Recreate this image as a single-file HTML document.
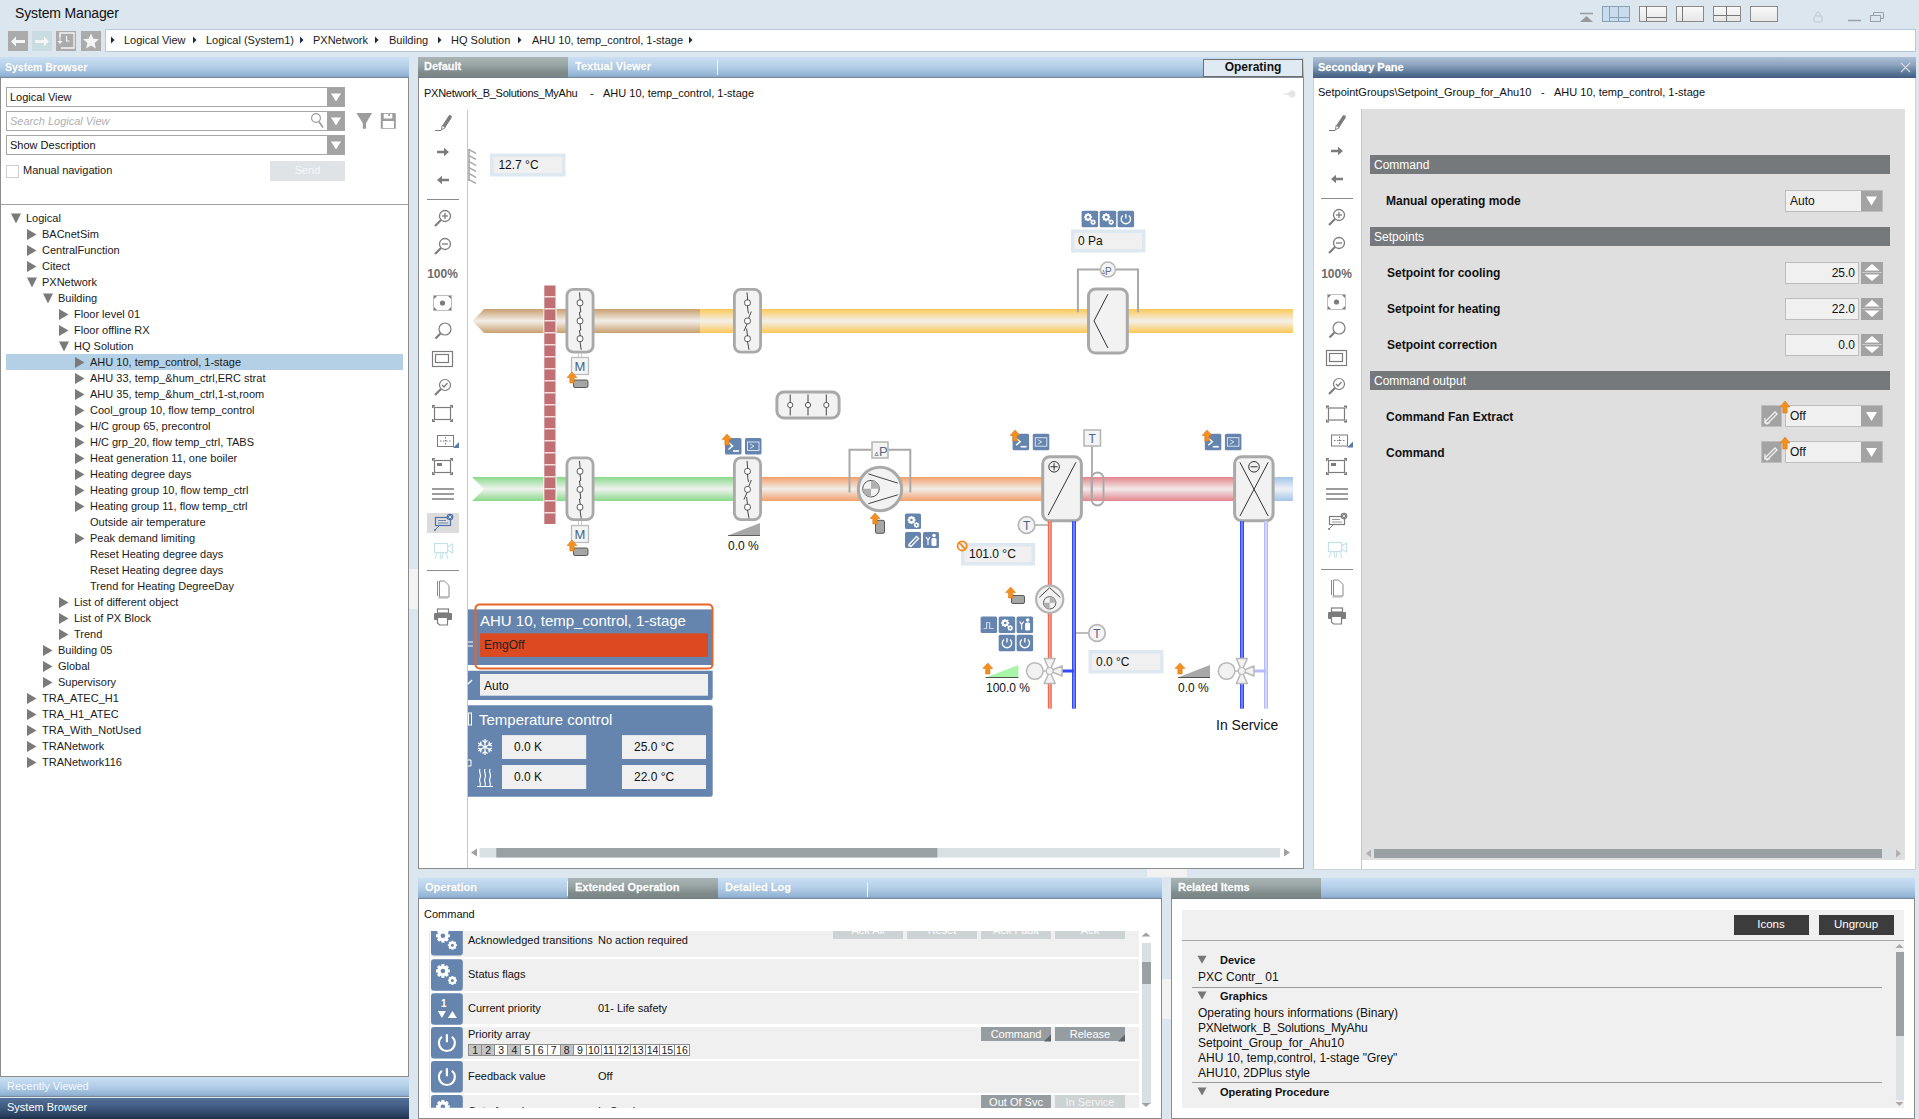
<!DOCTYPE html>
<html><head><meta charset="utf-8"><title>System Manager</title>
<style>
html,body{margin:0;padding:0;width:1919px;height:1119px;overflow:hidden;background:#dbe6ef;font-family:"Liberation Sans",sans-serif;color:#000}
.a{position:absolute;box-sizing:border-box}
.t{position:absolute;white-space:nowrap;line-height:1;z-index:60}

.hdrblue{background:linear-gradient(#cadff3 0%,#b4cfe9 45%,#96b6d6 85%,#7f9fc2 100%);box-shadow:inset 0 -1px 0 #7a8898}
.hdrgrey{background:linear-gradient(#aab4b5 0%,#98a3a4 40%,#7e8a8a 75%,#7a8787 100%);box-shadow:inset 0 -1px 0 #6f7c88}
.hdrdark{background:linear-gradient(#adc1d7 0%,#8aa2bd 40%,#5c7898 75%,#3f5b80 100%)}
.ht{color:#fff;font-weight:bold;-webkit-text-stroke:0.3px currentColor;text-shadow:0 0 1px rgba(60,80,110,.5)}
.dd{position:absolute;box-sizing:border-box;background:#fff;border:1px solid #a6a6a6}
.ddb{position:absolute;background:#a3a3a3}

</style></head><body>
<div class="t " style="left:15px;top:5.95px;font-size:14px;color:#111;letter-spacing:-0.15px">System Manager</div><div class="a" style="left:8px;top:31px;width:20px;height:20px;background:#ababab"></div><div class="a" style="left:32px;top:31px;width:20px;height:20px;background:#c8dce2"></div><div class="a" style="left:56px;top:31px;width:20px;height:20px;background:#ababab"></div><div class="a" style="left:81px;top:31px;width:20px;height:20px;background:#ababab"></div><div class="a" style="left:105px;top:29px;width:1811px;height:23px;background:#fff;border:1px solid #b4c8dc"></div><div class="t " style="left:124px;top:35.19px;font-size:11px;color:#1a1a1a">Logical View</div><div class="t " style="left:206px;top:35.19px;font-size:11px;color:#1a1a1a">Logical (System1)</div><div class="t " style="left:313px;top:35.19px;font-size:11px;color:#1a1a1a">PXNetwork</div><div class="t " style="left:389px;top:35.19px;font-size:11px;color:#1a1a1a">Building</div><div class="t " style="left:451px;top:35.19px;font-size:11px;color:#1a1a1a">HQ Solution</div><div class="t " style="left:532px;top:35.19px;font-size:11px;color:#1a1a1a">AHU 10, temp_control, 1-stage</div><div class="a hdrblue" style="left:0px;top:57px;width:409px;height:21px;"></div><div class="t ht" style="left:5px;top:62.11px;font-size:10.5px;font-weight:bold;color:#fff">System Browser</div><div class="a" style="left:0px;top:78px;width:409px;height:999px;background:#fff;border:1px solid #8c8c8c;border-top:none"></div><div class="dd" style="left:6px;top:87px;width:339px;height:20px"></div><div class="ddb" style="left:327px;top:88px;width:17px;height:18px"></div><div class="t " style="left:10px;top:91.69px;font-size:11px;color:#111">Logical View</div><div class="dd" style="left:6px;top:111px;width:339px;height:20px"></div><div class="ddb" style="left:327px;top:112px;width:17px;height:18px"></div><div class="t " style="left:10px;top:115.69px;font-size:11px;font-style:italic;color:#b0b0b0">Search Logical View</div><div class="dd" style="left:6px;top:135px;width:339px;height:20px"></div><div class="ddb" style="left:327px;top:136px;width:17px;height:18px"></div><div class="t " style="left:10px;top:139.69px;font-size:11px;color:#111">Show Description</div><div class="a" style="left:6px;top:165px;width:13px;height:13px;background:#fff;border:1px solid #d0d0d0"></div><div class="t " style="left:23px;top:164.69px;font-size:11px;color:#222">Manual navigation</div><div class="a" style="left:270px;top:161px;width:75px;height:20px;background:#dfe3e6"></div><div class="t" style="left:270.0px;top:165.19px;width:75px;text-align:center;font-size:11px;color:#f6f7f8">Send</div><div class="a" style="left:1px;top:204px;width:407px;height:1px;background:#a0a0a0"></div><div class="a" style="left:6px;top:354px;width:397px;height:16px;background:#b4d0e6"></div><div class="t " style="left:26px;top:213.19px;font-size:11px;color:#1a1a1a">Logical</div><div class="t " style="left:42px;top:229.19px;font-size:11px;color:#1a1a1a">BACnetSim</div><div class="t " style="left:42px;top:245.19px;font-size:11px;color:#1a1a1a">CentralFunction</div><div class="t " style="left:42px;top:261.19px;font-size:11px;color:#1a1a1a">Citect</div><div class="t " style="left:42px;top:277.19px;font-size:11px;color:#1a1a1a">PXNetwork</div><div class="t " style="left:58px;top:293.19px;font-size:11px;color:#1a1a1a">Building</div><div class="t " style="left:74px;top:309.19px;font-size:11px;color:#1a1a1a">Floor level 01</div><div class="t " style="left:74px;top:325.19px;font-size:11px;color:#1a1a1a">Floor offline RX</div><div class="t " style="left:74px;top:341.19px;font-size:11px;color:#1a1a1a">HQ Solution</div><div class="t " style="left:90px;top:357.19px;font-size:11px;color:#1a1a1a">AHU 10, temp_control, 1-stage</div><div class="t " style="left:90px;top:373.19px;font-size:11px;color:#1a1a1a">AHU 33, temp_&amp;hum_ctrl,ERC strat</div><div class="t " style="left:90px;top:389.19px;font-size:11px;color:#1a1a1a">AHU 35, temp_&amp;hum_ctrl,1-st,room</div><div class="t " style="left:90px;top:405.19px;font-size:11px;color:#1a1a1a">Cool_group 10, flow temp_control</div><div class="t " style="left:90px;top:421.19px;font-size:11px;color:#1a1a1a">H/C group 65, precontrol</div><div class="t " style="left:90px;top:437.19px;font-size:11px;color:#1a1a1a">H/C grp_20, flow temp_ctrl, TABS</div><div class="t " style="left:90px;top:453.19px;font-size:11px;color:#1a1a1a">Heat generation 11, one boiler</div><div class="t " style="left:90px;top:469.19px;font-size:11px;color:#1a1a1a">Heating degree days</div><div class="t " style="left:90px;top:485.19px;font-size:11px;color:#1a1a1a">Heating group 10, flow temp_ctrl</div><div class="t " style="left:90px;top:501.19px;font-size:11px;color:#1a1a1a">Heating group 11, flow temp_ctrl</div><div class="t " style="left:90px;top:517.19px;font-size:11px;color:#1a1a1a">Outside air temperature</div><div class="t " style="left:90px;top:533.19px;font-size:11px;color:#1a1a1a">Peak demand limiting</div><div class="t " style="left:90px;top:549.19px;font-size:11px;color:#1a1a1a">Reset Heating degree days</div><div class="t " style="left:90px;top:565.19px;font-size:11px;color:#1a1a1a">Reset Heating degree days</div><div class="t " style="left:90px;top:581.19px;font-size:11px;color:#1a1a1a">Trend for Heating DegreeDay</div><div class="t " style="left:74px;top:597.19px;font-size:11px;color:#1a1a1a">List of different object</div><div class="t " style="left:74px;top:613.19px;font-size:11px;color:#1a1a1a">List of PX Block</div><div class="t " style="left:74px;top:629.19px;font-size:11px;color:#1a1a1a">Trend</div><div class="t " style="left:58px;top:645.19px;font-size:11px;color:#1a1a1a">Building 05</div><div class="t " style="left:58px;top:661.19px;font-size:11px;color:#1a1a1a">Global</div><div class="t " style="left:58px;top:677.19px;font-size:11px;color:#1a1a1a">Supervisory</div><div class="t " style="left:42px;top:693.19px;font-size:11px;color:#1a1a1a">TRA_ATEC_H1</div><div class="t " style="left:42px;top:709.19px;font-size:11px;color:#1a1a1a">TRA_H1_ATEC</div><div class="t " style="left:42px;top:725.19px;font-size:11px;color:#1a1a1a">TRA_With_NotUsed</div><div class="t " style="left:42px;top:741.19px;font-size:11px;color:#1a1a1a">TRANetwork</div><div class="t " style="left:42px;top:757.19px;font-size:11px;color:#1a1a1a">TRANetwork116</div><div class="a hdrblue" style="left:0px;top:1077px;width:409px;height:20px;"></div><div class="t " style="left:7px;top:1081.19px;font-size:11px;color:#f4f8fc">Recently Viewed</div><div class="a" style="left:0px;top:1098px;width:409px;height:21px;background:linear-gradient(#55709a 0%,#3f5a80 45%,#2a4262 80%,#1d304c 100%)"></div><div class="t " style="left:7px;top:1102.19px;font-size:11px;color:#fff">System Browser</div><div class="a hdrblue" style="left:418px;top:57px;width:886px;height:21px;"></div><div class="a hdrgrey" style="left:418px;top:57px;width:150px;height:21px;"></div><div class="t ht" style="left:424px;top:61.19px;font-size:11px;font-weight:bold;color:#fff">Default</div><div class="t ht" style="left:575px;top:61.19px;font-size:11px;font-weight:bold;color:#fff">Textual Viewer</div><div class="a" style="left:717px;top:60px;width:1px;height:15px;background:#f4f8fc"></div><div class="a" style="left:1203px;top:59px;width:100px;height:18px;background:#dfeaf3;border:1px solid #6e6e6e"></div><div class="t" style="left:1203.0px;top:61.34px;width:100px;text-align:center;font-size:12px;font-weight:bold;color:#111">Operating</div><div class="a" style="left:418px;top:78px;width:886px;height:791px;background:#fff;border:1px solid #8c8c8c;border-top:none"></div><div class="t " style="left:424px;top:87.69px;font-size:11px;color:#111;letter-spacing:-0.25px">PXNetwork_B_Solutions_MyAhu</div><div class="t " style="left:590px;top:87.69px;font-size:11px;color:#111">-</div><div class="t " style="left:603px;top:87.69px;font-size:11px;color:#111">AHU 10, temp_control, 1-stage</div><div class="a" style="left:467px;top:110px;width:1px;height:758px;background:#c8c8c8"></div><div class="t" style="left:422.5px;top:268.34px;width:40px;text-align:center;font-size:12px;font-weight:bold;color:#6c6c6c">100%</div><div class="t " style="left:498.4px;top:158.64px;font-size:12px;color:#111">12.7 °C</div><div class="t " style="left:1078px;top:235.14px;font-size:12px;color:#111">0 Pa</div><div class="t " style="left:969px;top:548.14px;font-size:12px;color:#111">101.0 °C</div><div class="t " style="left:1096px;top:656.34px;font-size:12px;color:#111">0.0 °C</div><div class="t " style="left:728px;top:539.84px;font-size:12px;color:#111">0.0 %</div><div class="t " style="left:986px;top:681.84px;font-size:12px;color:#111">100.0 %</div><div class="t " style="left:1178px;top:681.84px;font-size:12px;color:#111">0.0 %</div><div class="t " style="left:1216px;top:718.45px;font-size:14px;color:#111">In Service</div><div class="t " style="left:480px;top:612.90px;font-size:15px;color:#fff">AHU 10, temp_control, 1-stage</div><div class="t " style="left:484px;top:638.84px;font-size:12px;color:#222">EmgOff</div><div class="t " style="left:484px;top:679.64px;font-size:12px;color:#111">Auto</div><div class="t " style="left:479px;top:712.00px;font-size:15px;color:#fff">Temperature control</div><div class="t " style="left:514px;top:741.04px;font-size:12px;color:#111">0.0 K</div><div class="t " style="left:634px;top:741.04px;font-size:12px;color:#111">25.0 °C</div><div class="t " style="left:514px;top:770.84px;font-size:12px;color:#111">0.0 K</div><div class="t " style="left:634px;top:770.84px;font-size:12px;color:#111">22.0 °C</div><div class="a hdrdark" style="left:1313px;top:57px;width:603px;height:21px;"></div><div class="t ht" style="left:1318px;top:62.19px;font-size:11px;font-weight:bold;color:#fff">Secondary Pane</div><div class="a" style="left:1313px;top:78px;width:603px;height:792px;background:#fff;border:1px solid #c8d3db;border-top:none"></div><div class="t " style="left:1318px;top:86.69px;font-size:11px;color:#111">SetpointGroups\Setpoint_Group_for_Ahu10</div><div class="t " style="left:1541px;top:86.69px;font-size:11px;color:#111">-</div><div class="t " style="left:1554px;top:86.69px;font-size:11px;color:#111">AHU 10, temp_control, 1-stage</div><div class="a" style="left:1361px;top:109px;width:1px;height:760px;background:#c8c8c8"></div><div class="t" style="left:1316.5px;top:268.34px;width:40px;text-align:center;font-size:12px;font-weight:bold;color:#6c6c6c">100%</div><div class="a" style="left:1362px;top:109px;width:543px;height:751px;background:#dfdfdf"></div><div class="a" style="left:1370px;top:154.5px;width:520px;height:19.5px;background:#76797c"></div><div class="t " style="left:1374px;top:158.64px;font-size:12px;color:#fff">Command</div><div class="a" style="left:1370px;top:226.5px;width:520px;height:19.5px;background:#76797c"></div><div class="t " style="left:1374px;top:230.64px;font-size:12px;color:#fff">Setpoints</div><div class="a" style="left:1370px;top:370.5px;width:520px;height:19.5px;background:#76797c"></div><div class="t " style="left:1374px;top:374.64px;font-size:12px;color:#fff">Command output</div><div class="t " style="left:1386px;top:194.64px;font-size:12px;font-weight:bold;color:#111">Manual operating mode</div><div class="t " style="left:1387px;top:266.64px;font-size:12px;font-weight:bold;color:#111">Setpoint for cooling</div><div class="t " style="left:1387px;top:302.64px;font-size:12px;font-weight:bold;color:#111">Setpoint for heating</div><div class="t " style="left:1387px;top:338.64px;font-size:12px;font-weight:bold;color:#111">Setpoint correction</div><div class="t " style="left:1386px;top:410.64px;font-size:12px;font-weight:bold;color:#111">Command Fan Extract</div><div class="t " style="left:1386px;top:446.64px;font-size:12px;font-weight:bold;color:#111">Command</div><div class="a" style="left:1785px;top:189.5px;width:98px;height:22px;background:#f0f0f0;border:1px solid #bdbdbd"></div><div class="a" style="left:1861px;top:190.5px;width:21px;height:20px;background:#a3a3a3"></div><div class="t " style="left:1790px;top:194.94px;font-size:12px;color:#111">Auto</div><div class="a" style="left:1785px;top:261.5px;width:74px;height:22px;background:#f0f0f0;border:1px solid #bdbdbd"></div><div class="t" style="left:1795px;top:266.94px;width:60px;text-align:right;font-size:12px;color:#111">25.0</div><div class="a" style="left:1861px;top:261.5px;width:22px;height:22px;background:#a3a3a3"></div><div class="a" style="left:1785px;top:297.5px;width:74px;height:22px;background:#f0f0f0;border:1px solid #bdbdbd"></div><div class="t" style="left:1795px;top:302.94px;width:60px;text-align:right;font-size:12px;color:#111">22.0</div><div class="a" style="left:1861px;top:297.5px;width:22px;height:22px;background:#a3a3a3"></div><div class="a" style="left:1785px;top:333.5px;width:74px;height:22px;background:#f0f0f0;border:1px solid #bdbdbd"></div><div class="t" style="left:1795px;top:338.94px;width:60px;text-align:right;font-size:12px;color:#111">0.0</div><div class="a" style="left:1861px;top:333.5px;width:22px;height:22px;background:#a3a3a3"></div><div class="a" style="left:1785px;top:405px;width:98px;height:22px;background:#f0f0f0;border:1px solid #bdbdbd"></div><div class="a" style="left:1861px;top:406px;width:21px;height:20px;background:#a3a3a3"></div><div class="t " style="left:1790px;top:410.44px;font-size:12px;color:#111">Off</div><div class="a" style="left:1761px;top:405px;width:21px;height:22px;background:#a3a3a3;border:1px solid #bdbdbd"></div><div class="a" style="left:1785px;top:441px;width:98px;height:22px;background:#f0f0f0;border:1px solid #bdbdbd"></div><div class="a" style="left:1861px;top:442px;width:21px;height:20px;background:#a3a3a3"></div><div class="t " style="left:1790px;top:446.44px;font-size:12px;color:#111">Off</div><div class="a" style="left:1761px;top:441px;width:21px;height:22px;background:#a3a3a3;border:1px solid #bdbdbd"></div><div class="a hdrblue" style="left:418px;top:878px;width:744px;height:21px;"></div><div class="a hdrgrey" style="left:568px;top:878px;width:150px;height:21px;"></div><div class="t ht" style="left:425px;top:882.19px;font-size:11px;font-weight:bold;color:#fff">Operation</div><div class="a" style="left:567px;top:881px;width:1px;height:15px;background:#f4f8fc"></div><div class="t ht" style="left:575px;top:882.19px;font-size:11px;font-weight:bold;color:#fff">Extended Operation</div><div class="t ht" style="left:725px;top:882.19px;font-size:11px;font-weight:bold;color:#fff">Detailed Log</div><div class="a" style="left:867px;top:883px;width:1px;height:14px;background:#f4f8fc"></div><div class="a" style="left:1147px;top:869px;width:40px;height:8px;background:#f2f2f2"></div><div class="a" style="left:418px;top:899px;width:744px;height:220px;background:#fff;border:1px solid #8c8c8c;border-top:none"></div><div class="t " style="left:424px;top:908.69px;font-size:11px;color:#111">Command</div><div class="a" style="left:429px;top:931px;width:1px;height:177px;background:#e8e8e8"></div><div class="a" style="left:431px;top:931px;width:708px;height:25.799999999999955px;background:#f0f0f0"></div><div class="a" style="left:431px;top:959.2px;width:708px;height:31.5px;background:#f0f0f0"></div><div class="a" style="left:431px;top:993.3px;width:708px;height:31.100000000000136px;background:#f0f0f0"></div><div class="a" style="left:431px;top:1027px;width:708px;height:31.5px;background:#f0f0f0"></div><div class="a" style="left:431px;top:1061px;width:708px;height:31.59999999999991px;background:#f0f0f0"></div><div class="a" style="left:431px;top:1095px;width:708px;height:12.700000000000045px;background:#f0f0f0"></div><div class="a" style="left:431px;top:1095px;width:708px;height:12.7px;background:#f0f0f0"></div><div class="t " style="left:468px;top:935.19px;font-size:11px;color:#111">Acknowledged transitions</div><div class="t " style="left:598px;top:935.19px;font-size:11px;color:#111">No action required</div><div class="t " style="left:468px;top:969.19px;font-size:11px;color:#111">Status flags</div><div class="t " style="left:468px;top:1002.69px;font-size:11px;color:#111">Current priority</div><div class="t " style="left:598px;top:1002.69px;font-size:11px;color:#111">01- Life safety</div><div class="t " style="left:468px;top:1028.69px;font-size:11px;color:#111">Priority array</div><div class="t " style="left:468px;top:1070.69px;font-size:11px;color:#111">Feedback value</div><div class="t " style="left:598px;top:1070.69px;font-size:11px;color:#111">Off</div><div class="a" style="left:468px;top:1043.5px;width:14.1px;height:12.5px;background:#c4c4c4;border:1px solid #8c8c8c"></div><div class="t" style="left:465.05px;top:1044.61px;width:20px;text-align:center;font-size:10.5px;color:#222">1</div><div class="a" style="left:481.1px;top:1043.5px;width:14.1px;height:12.5px;background:#c4c4c4;border:1px solid #8c8c8c"></div><div class="t" style="left:478.15000000000003px;top:1044.61px;width:20px;text-align:center;font-size:10.5px;color:#222">2</div><div class="a" style="left:494.2px;top:1043.5px;width:14.1px;height:12.5px;background:#fff;border:1px solid #8c8c8c"></div><div class="t" style="left:491.25000000000006px;top:1044.61px;width:20px;text-align:center;font-size:10.5px;color:#222">3</div><div class="a" style="left:507.3px;top:1043.5px;width:14.1px;height:12.5px;background:#c4c4c4;border:1px solid #8c8c8c"></div><div class="t" style="left:504.35px;top:1044.61px;width:20px;text-align:center;font-size:10.5px;color:#222">4</div><div class="a" style="left:520.4px;top:1043.5px;width:14.1px;height:12.5px;background:#fff;border:1px solid #8c8c8c"></div><div class="t" style="left:517.45px;top:1044.61px;width:20px;text-align:center;font-size:10.5px;color:#222">5</div><div class="a" style="left:533.5px;top:1043.5px;width:14.1px;height:12.5px;background:#fff;border:1px solid #8c8c8c"></div><div class="t" style="left:530.5500000000001px;top:1044.61px;width:20px;text-align:center;font-size:10.5px;color:#222">6</div><div class="a" style="left:546.6px;top:1043.5px;width:14.1px;height:12.5px;background:#fff;border:1px solid #8c8c8c"></div><div class="t" style="left:543.6500000000001px;top:1044.61px;width:20px;text-align:center;font-size:10.5px;color:#222">7</div><div class="a" style="left:559.7px;top:1043.5px;width:14.1px;height:12.5px;background:#c4c4c4;border:1px solid #8c8c8c"></div><div class="t" style="left:556.7500000000001px;top:1044.61px;width:20px;text-align:center;font-size:10.5px;color:#222">8</div><div class="a" style="left:572.8px;top:1043.5px;width:14.1px;height:12.5px;background:#fff;border:1px solid #8c8c8c"></div><div class="t" style="left:569.8500000000001px;top:1044.61px;width:20px;text-align:center;font-size:10.5px;color:#222">9</div><div class="a" style="left:585.9px;top:1043.5px;width:15.7px;height:12.5px;background:#fff;border:1px solid #8c8c8c"></div><div class="t" style="left:583.7500000000002px;top:1044.61px;width:20px;text-align:center;font-size:10.5px;color:#222">10</div><div class="a" style="left:600.6px;top:1043.5px;width:15.7px;height:12.5px;background:#fff;border:1px solid #8c8c8c"></div><div class="t" style="left:598.4500000000003px;top:1044.61px;width:20px;text-align:center;font-size:10.5px;color:#222">11</div><div class="a" style="left:615.3px;top:1043.5px;width:15.7px;height:12.5px;background:#fff;border:1px solid #8c8c8c"></div><div class="t" style="left:613.1500000000003px;top:1044.61px;width:20px;text-align:center;font-size:10.5px;color:#222">12</div><div class="a" style="left:630.0px;top:1043.5px;width:15.7px;height:12.5px;background:#fff;border:1px solid #8c8c8c"></div><div class="t" style="left:627.8500000000004px;top:1044.61px;width:20px;text-align:center;font-size:10.5px;color:#222">13</div><div class="a" style="left:644.7px;top:1043.5px;width:15.7px;height:12.5px;background:#fff;border:1px solid #8c8c8c"></div><div class="t" style="left:642.5500000000004px;top:1044.61px;width:20px;text-align:center;font-size:10.5px;color:#222">14</div><div class="a" style="left:659.4px;top:1043.5px;width:15.7px;height:12.5px;background:#fff;border:1px solid #8c8c8c"></div><div class="t" style="left:657.2500000000005px;top:1044.61px;width:20px;text-align:center;font-size:10.5px;color:#222">15</div><div class="a" style="left:674.1px;top:1043.5px;width:15.7px;height:12.5px;background:#fff;border:1px solid #8c8c8c"></div><div class="t" style="left:671.9500000000005px;top:1044.61px;width:20px;text-align:center;font-size:10.5px;color:#222">16</div><div class="a" style="left:833px;top:931px;width:69.60000000000002px;height:8.200000000000045px;background:#cdd2d3"></div><div class="a" style="left:907px;top:931px;width:69.60000000000002px;height:8.200000000000045px;background:#cdd2d3"></div><div class="a" style="left:980.8px;top:931px;width:70.10000000000014px;height:8.200000000000045px;background:#cdd2d3"></div><div class="a" style="left:1055px;top:931px;width:69.79999999999995px;height:8.200000000000045px;background:#cdd2d3"></div><div class="a" style="left:828px;top:931px;width:80px;height:8.2px;overflow:hidden;z-index:60"><div class="t" style="left:0;top:-6px;width:80px;text-align:center;font-size:11px;color:#fff">Ack All</div></div><div class="a" style="left:902px;top:931px;width:80px;height:8.2px;overflow:hidden;z-index:60"><div class="t" style="left:0;top:-6px;width:80px;text-align:center;font-size:11px;color:#fff">Reset</div></div><div class="a" style="left:976px;top:931px;width:80px;height:8.2px;overflow:hidden;z-index:60"><div class="t" style="left:0;top:-6px;width:80px;text-align:center;font-size:11px;color:#fff">Ack Fault</div></div><div class="a" style="left:1050px;top:931px;width:80px;height:8.2px;overflow:hidden;z-index:60"><div class="t" style="left:0;top:-6px;width:80px;text-align:center;font-size:11px;color:#fff">Ack</div></div><div class="a" style="left:981px;top:1027px;width:70px;height:14.400000000000091px;background:#969da1"></div><div class="t" style="left:981.0px;top:1028.89px;width:70px;text-align:center;font-size:11px;color:#fff">Command</div><div class="a" style="left:1055px;top:1027px;width:70px;height:14.400000000000091px;background:#969da1"></div><div class="t" style="left:1055.0px;top:1028.89px;width:70px;text-align:center;font-size:11px;color:#fff">Release</div><div class="a" style="left:981px;top:1095px;width:70px;height:12.7px;background:#969da1"></div><div class="a" style="left:1055px;top:1095px;width:70px;height:12.7px;background:#cdd2d3"></div><div class="a" style="left:981px;top:1095px;width:70px;height:12.7px;overflow:hidden;z-index:60"><div class="t" style="left:0;top:1.5px;width:70px;text-align:center;font-size:11px;color:#fff">Out Of Svc</div></div><div class="a" style="left:1055px;top:1095px;width:70px;height:12.7px;overflow:hidden;z-index:60"><div class="t" style="left:0;top:1.5px;width:70px;text-align:center;font-size:11px;color:#f4f4f4">In Service</div></div><div class="a" style="left:468px;top:1095px;width:600px;height:12.7px;overflow:hidden;z-index:60"><div class="t" style="left:0;top:11px;font-size:11px;color:#111">Out of service</div><div class="t" style="left:130px;top:11px;font-size:11px;color:#111">In Service</div></div><div class="a" style="left:1141.6px;top:943px;width:9px;height:161px;background:#d9e0e3"></div><div class="a" style="left:1141.6px;top:961.8px;width:9px;height:22.4px;background:#9aa1a4"></div><div class="a hdrblue" style="left:1171px;top:878px;width:744px;height:21px;"></div><div class="a hdrgrey" style="left:1171px;top:878px;width:150px;height:21px;"></div><div class="t ht" style="left:1178px;top:882.19px;font-size:11px;font-weight:bold;color:#fff">Related Items</div><div class="a" style="left:1171px;top:899px;width:744px;height:220px;background:#fff;border:1px solid #8c8c8c;border-top:none"></div><div class="a" style="left:1182px;top:909.6px;width:722px;height:198.4px;background:#f0f0f0"></div><div class="a" style="left:1733.6px;top:914.7px;width:75px;height:20px;background:#3c3c3c"></div><div class="t" style="left:1733.5px;top:918.77px;width:75px;text-align:center;font-size:11.5px;color:#fff">Icons</div><div class="a" style="left:1818.6px;top:914.7px;width:75px;height:20px;background:#3c3c3c"></div><div class="t" style="left:1818.5px;top:918.77px;width:75px;text-align:center;font-size:11.5px;color:#fff">Ungroup</div><div class="a" style="left:1182px;top:940px;width:722px;height:1px;background:#a8a8a8"></div><div class="a" style="left:1192px;top:986.5px;width:690px;height:1px;background:#9a9a9a"></div><div class="a" style="left:1192px;top:1082px;width:690px;height:1px;background:#9a9a9a"></div><div class="t " style="left:1220px;top:954.89px;font-size:11px;font-weight:bold;color:#111">Device</div><div class="t " style="left:1220px;top:990.69px;font-size:11px;font-weight:bold;color:#111">Graphics</div><div class="t " style="left:1220px;top:1086.69px;font-size:11px;font-weight:bold;color:#111">Operating Procedure</div><div class="t " style="left:1198px;top:971.34px;font-size:12px;color:#111">PXC Contr_ 01</div><div class="t " style="left:1198px;top:1007.34px;font-size:12px;color:#111">Operating hours informations (Binary)</div><div class="t " style="left:1198px;top:1022.34px;font-size:12px;color:#111;letter-spacing:-0.2px">PXNetwork_B_Solutions_MyAhu</div><div class="t " style="left:1198px;top:1037.34px;font-size:12px;color:#111">Setpoint_Group_for_Ahu10</div><div class="t " style="left:1198px;top:1052.34px;font-size:12px;color:#111">AHU 10, temp,control, 1-stage "Grey"</div><div class="t " style="left:1198px;top:1067.34px;font-size:12px;color:#111">AHU10, 2DPlus style</div><div class="a" style="left:1895.5px;top:952px;width:8px;height:84px;background:#9aa1a4"></div><div class="a" style="left:1895.5px;top:1036px;width:8px;height:64px;background:#dde2e5"></div><div class="a" style="left:409px;top:568.5px;width:9px;height:40px;background:#f3f3f3"></div><div class="a" style="left:1162px;top:978.5px;width:9px;height:40px;background:#f3f3f3"></div>
<svg class="a" style="left:0;top:0;z-index:50;pointer-events:none" width="1919" height="1119" viewBox="0 0 1919 1119">
<g fill="none" stroke="#8a8a8a"><path d="M1580 13.5h13" stroke="#9a9a9a" stroke-width="1.5"/><path d="M1580 22l6.5-6 6.5 6z" fill="#9a9a9a" stroke="none"/><rect x="1602.5" y="6.5" width="27" height="15" fill="#c9dcee" stroke="#8aa0b5"/><path d="M1609.5 6.5v15M1618.5 6.5v15M1609.5 17.5h20" stroke="#8aa0b5"/><defs></defs><rect x="1639.5" y="6.5" width="27" height="15" fill="url(#lg1)" stroke="#8a8a8a"/><path d="M1646.5 6.5v15M1646.5 17.5h20" stroke="#777"/><defs></defs><rect x="1676.5" y="6.5" width="27" height="15" fill="url(#lg1)" stroke="#8a8a8a"/><path d="M1682.5 6.5v15" stroke="#777"/><defs></defs><rect x="1713.5" y="6.5" width="27" height="15" fill="url(#lg1)" stroke="#8a8a8a"/><path d="M1726.5 6.5v15M1713.5 15.5h27" stroke="#777"/><defs></defs><rect x="1750.5" y="6.5" width="27" height="15" fill="url(#lg1)" stroke="#8a8a8a"/></g><defs><linearGradient id="lg1" x1="0" y1="0" x2="0" y2="1"><stop offset="0" stop-color="#fafafa"/><stop offset="1" stop-color="#e6e6e6"/></linearGradient></defs><rect x="1814" y="16" width="8" height="6" rx="1" fill="none" stroke="#c4c8cc"/><path d="M1816 16v-2a2 2 0 0 1 4 0v2" fill="none" stroke="#c4c8cc"/><path d="M1848 20.5h13" stroke="#9aa0a6" stroke-width="1.5"/><rect x="1870.5" y="15.5" width="10" height="6" fill="none" stroke="#9aa0a6"/><path d="M1873.5 15.5v-3h10v6h-3" fill="none" stroke="#9aa0a6"/><path d="M11 41.5l5-5v3.5h9v3h-9v3.5z" fill="#f4f4f4"/><path d="M49 41.5l-5-5v3.5h-9v3h9v3.5z" fill="#f4f4f4"/><path d="M60 37v-4h14v15h-13" fill="none" stroke="#f4f4f4" stroke-width="1.3"/><path d="M60 34v8" stroke="#f4f4f4" stroke-width="1"/><path d="M57.5 41l2.5 3 2.5-3z" fill="#f4f4f4"/><path d="M66.5 36v5h3" stroke="#f4f4f4" fill="none" stroke-width="1.2"/><path d="M91 33.5l2.3 5.2 5.6.5-4.3 3.7 1.3 5.5-4.9-3-4.9 3 1.3-5.5-4.3-3.7 5.6-.5z" fill="#f4f4f4"/><path d="M111 36.5l3.5 3.5-3.5 3.5z" fill="#1a2a40"/><path d="M193 36.5l3.5 3.5-3.5 3.5z" fill="#1a2a40"/><path d="M300 36.5l3.5 3.5-3.5 3.5z" fill="#1a2a40"/><path d="M375 36.5l3.5 3.5-3.5 3.5z" fill="#1a2a40"/><path d="M438 36.5l3.5 3.5-3.5 3.5z" fill="#1a2a40"/><path d="M518 36.5l3.5 3.5-3.5 3.5z" fill="#1a2a40"/><path d="M689 36.5l3.5 3.5-3.5 3.5z" fill="#1a2a40"/><path d="M331 93.5h10l-5 8z" fill="#fff"/><path d="M331 117.5h10l-5 8z" fill="#fff"/><path d="M331 141.5h10l-5 8z" fill="#fff"/><circle cx="316" cy="118" r="4.4" fill="none" stroke="#9a9a9a" stroke-width="1.2"/><path d="M318.8 121.5l4.2 6" stroke="#9a9a9a" stroke-width="1.6"/><path d="M356.4 113H372L366 123.3V128.8H362.8V123.3Z" fill="#9c9c9c"/><path d="M380.8 113H395L395.8 114V128.8H380.8Z" fill="#9c9c9c"/><rect x="383.7" y="113.8" width="8.6" height="4.7" fill="#fff"/><rect x="388.3" y="113.8" width="1.7" height="2.2" fill="#9c9c9c"/><rect x="382.8" y="121" width="11.2" height="7" fill="#fff"/><path d="M11 213.5h10l-5 10z" fill="#7a7a7a"/><path d="M27 229.0l9.5 5.5-9.5 5.5z" fill="#7a7a7a"/><path d="M27 245.0l9.5 5.5-9.5 5.5z" fill="#7a7a7a"/><path d="M27 261.0l9.5 5.5-9.5 5.5z" fill="#7a7a7a"/><path d="M27 277.5h10l-5 10z" fill="#7a7a7a"/><path d="M43 293.5h10l-5 10z" fill="#7a7a7a"/><path d="M59 309.0l9.5 5.5-9.5 5.5z" fill="#7a7a7a"/><path d="M59 325.0l9.5 5.5-9.5 5.5z" fill="#7a7a7a"/><path d="M59 341.5h10l-5 10z" fill="#7a7a7a"/><path d="M75 357.0l9.5 5.5-9.5 5.5z" fill="#7a7a7a"/><path d="M75 373.0l9.5 5.5-9.5 5.5z" fill="#7a7a7a"/><path d="M75 389.0l9.5 5.5-9.5 5.5z" fill="#7a7a7a"/><path d="M75 405.0l9.5 5.5-9.5 5.5z" fill="#7a7a7a"/><path d="M75 421.0l9.5 5.5-9.5 5.5z" fill="#7a7a7a"/><path d="M75 437.0l9.5 5.5-9.5 5.5z" fill="#7a7a7a"/><path d="M75 453.0l9.5 5.5-9.5 5.5z" fill="#7a7a7a"/><path d="M75 469.0l9.5 5.5-9.5 5.5z" fill="#7a7a7a"/><path d="M75 485.0l9.5 5.5-9.5 5.5z" fill="#7a7a7a"/><path d="M75 501.0l9.5 5.5-9.5 5.5z" fill="#7a7a7a"/><path d="M75 533.0l9.5 5.5-9.5 5.5z" fill="#7a7a7a"/><path d="M59 597.0l9.5 5.5-9.5 5.5z" fill="#7a7a7a"/><path d="M59 613.0l9.5 5.5-9.5 5.5z" fill="#7a7a7a"/><path d="M59 629.0l9.5 5.5-9.5 5.5z" fill="#7a7a7a"/><path d="M43 645.0l9.5 5.5-9.5 5.5z" fill="#7a7a7a"/><path d="M43 661.0l9.5 5.5-9.5 5.5z" fill="#7a7a7a"/><path d="M43 677.0l9.5 5.5-9.5 5.5z" fill="#7a7a7a"/><path d="M27 693.0l9.5 5.5-9.5 5.5z" fill="#7a7a7a"/><path d="M27 709.0l9.5 5.5-9.5 5.5z" fill="#7a7a7a"/><path d="M27 725.0l9.5 5.5-9.5 5.5z" fill="#7a7a7a"/><path d="M27 741.0l9.5 5.5-9.5 5.5z" fill="#7a7a7a"/><path d="M27 757.0l9.5 5.5-9.5 5.5z" fill="#7a7a7a"/><path d="M1284 94h6" stroke="#e0e0e0" stroke-width="1.2"/><circle cx="1292" cy="94" r="3.5" fill="#e4e4e4"/><path d="M450 117L443.8 126.5" stroke="#7c7c7c" stroke-width="3.6" stroke-linecap="round"/><path d="M442.1 125.3L445.3 127.5L441.5 129.8Z" fill="#fff" stroke="#7c7c7c" stroke-width="0.9"/><path d="M435 130.5H441L441.8 129.5" fill="none" stroke="#7c7c7c" stroke-width="1"/><path d="M437 150.8h7v-3l5 4.2-5 4.2v-3h-7z" fill="#7c7c7c"/><path d="M449 178.8h-7v-3l-5 4.2 5 4.2v-3h7z" fill="#7c7c7c"/><path d="M427 199.5h32" stroke="#8a8a8a" stroke-width="1"/><circle cx="445" cy="216" r="5.5" fill="none" stroke="#7c7c7c" stroke-width="1.3"/><path d="M441 220l-6 6" stroke="#7c7c7c" stroke-width="2.2"/><path d="M442 216h6" stroke="#7c7c7c" stroke-width="1.3"/><path d="M445 213v6" stroke="#7c7c7c" stroke-width="1.3"/><circle cx="445" cy="244" r="5.5" fill="none" stroke="#7c7c7c" stroke-width="1.3"/><path d="M441 248l-6 6" stroke="#7c7c7c" stroke-width="2.2"/><path d="M442 244h6" stroke="#7c7c7c" stroke-width="1.3"/><rect x="433.5" y="295.5" width="18" height="15" fill="none" stroke="#bdbdbd" stroke-width="1"/><circle cx="442.5" cy="303" r="2.6" fill="#7c7c7c"/><path d="M434 296l3 0-3 3zM451 296l-3 0 3 3zM434 310l3 0-3-3zM451 310l-3 0 3-3z" fill="#7c7c7c"/><circle cx="445" cy="329" r="6" fill="none" stroke="#7c7c7c" stroke-width="1.2"/><path d="M440.5 333.5l-5 5" stroke="#7c7c7c" stroke-width="2.2"/><rect x="432.5" y="351.5" width="20" height="15" fill="none" stroke="#7c7c7c" stroke-width="1.2"/><rect x="435.5" y="354.5" width="13" height="8" fill="none" stroke="#7c7c7c" stroke-width="1.2"/><circle cx="445" cy="385" r="5.5" fill="none" stroke="#7c7c7c" stroke-width="1.2"/><path d="M441 389l-6 6" stroke="#7c7c7c" stroke-width="2.2"/><path d="M442 385l2 2 3.5-4" fill="none" stroke="#7c7c7c" stroke-width="1.3"/><rect x="434.5" y="407.5" width="16" height="12" fill="none" stroke="#7c7c7c" stroke-width="1.2"/><path d="M432 405h3v1.5h-1.5v1.5h-1.5zM453 405h-3v1.5h1.5v1.5h1.5zM432 422h3v-1.5h-1.5v-1.5h-1.5zM453 422h-3v-1.5h1.5v-1.5h1.5z" fill="#7c7c7c"/><rect x="437.5" y="435.5" width="16" height="11" fill="none" stroke="#7c7c7c" stroke-width="1"/><path d="M445.5 437v8M440 441h11" stroke="#7c7c7c" stroke-width="1" stroke-dasharray="1.5 1.5"/><path d="M453 448l6-6v6z" fill="#5a7bb0"/><rect x="434.5" y="460.5" width="16" height="12" fill="none" stroke="#7c7c7c" stroke-width="1.2"/><rect x="437" y="463" width="5" height="3" fill="#7c7c7c"/><path d="M432 458h3v1.5h-1.5v1.5h-1.5zM453 458h-3v1.5h1.5v1.5h1.5zM432 475h3v-1.5h-1.5v-1.5h-1.5zM453 475h-3v-1.5h1.5v-1.5h1.5z" fill="#7c7c7c"/><path d="M432 489h22M432 494h22M432 499h22" stroke="#7c7c7c" stroke-width="1.4"/><rect x="427" y="513" width="32" height="20" fill="#dcdcdc"/><rect x="435.5" y="517.5" width="15" height="8" fill="none" stroke="#4f72a8" stroke-width="1.2"/><path d="M438 520.5h8M438 523h10" stroke="#4f72a8" stroke-width="0.8"/><path d="M439 526l-4 4" stroke="#4f72a8" stroke-width="1"/><circle cx="435" cy="530" r="1" fill="#4f72a8"/><circle cx="450" cy="517" r="3.3" fill="#4f72a8"/><path d="M448.5 515.5l3 3M451.5 515.5l-3 3" stroke="#fff" stroke-width="0.8"/><rect x="434.5" y="543.5" width="13" height="9" fill="none" stroke="#c4e2e8" stroke-width="1.2"/><path d="M447.5 547l5-3v9l-5-3" fill="none" stroke="#c4e2e8" stroke-width="1.2"/><path d="M437 553l-2 6M440 553l1 6M443 553l-1 6M446 553l2 6" stroke="#c4e2e8" stroke-width="1"/><path d="M427 570.5h32" stroke="#8a8a8a" stroke-width="1"/><path d="M437.5 581v15M439.5 581h5l4.5 4.5v11.5h-9.5z" fill="none" stroke="#8a8a8a" stroke-width="1"/><path d="M438 598h10" stroke="#b0b0b0" stroke-width="1"/><rect x="434" y="613" width="18" height="7" rx="1" fill="#7c7c7c"/><rect x="437.5" y="609" width="11" height="4" fill="none" stroke="#7c7c7c" stroke-width="1.2"/><path d="M437.5 618v5l2 2h8v-7" fill="#fff" stroke="#7c7c7c" stroke-width="1.2"/><defs><linearGradient id="gBr" x1="0" y1="0" x2="0" y2="1"><stop offset="0" stop-color="#c9a070"/><stop offset="0.5" stop-color="#f2eee9"/><stop offset="1" stop-color="#c9a070"/></linearGradient><linearGradient id="gYe" x1="0" y1="0" x2="0" y2="1"><stop offset="0" stop-color="#fdc859"/><stop offset="0.5" stop-color="#f3f0ea"/><stop offset="1" stop-color="#fdc859"/></linearGradient><linearGradient id="gGn" x1="0" y1="0" x2="0" y2="1"><stop offset="0" stop-color="#8ad98b"/><stop offset="0.5" stop-color="#eef3ee"/><stop offset="1" stop-color="#8ad98b"/></linearGradient><linearGradient id="gOr" x1="0" y1="0" x2="0" y2="1"><stop offset="0" stop-color="#f3a06b"/><stop offset="0.5" stop-color="#f2ede9"/><stop offset="1" stop-color="#f3a06b"/></linearGradient><linearGradient id="gPk" x1="0" y1="0" x2="0" y2="1"><stop offset="0" stop-color="#e4868c"/><stop offset="0.5" stop-color="#f2eaeb"/><stop offset="1" stop-color="#e4868c"/></linearGradient><linearGradient id="gBl" x1="0" y1="0" x2="0" y2="1"><stop offset="0" stop-color="#a5c5ea"/><stop offset="0.5" stop-color="#eef1f6"/><stop offset="1" stop-color="#a5c5ea"/></linearGradient></defs><path d="M469 149v32" stroke="#a8a8a8" stroke-width="1.6"/><path d="M469 149.7L475.6 153.2" stroke="#a8a8a8" stroke-width="1.5" stroke-linecap="round"/><path d="M469 155.7L475.6 159.2" stroke="#a8a8a8" stroke-width="1.5" stroke-linecap="round"/><path d="M469 161.7L475.6 165.2" stroke="#a8a8a8" stroke-width="1.5" stroke-linecap="round"/><path d="M469 167.7L475.6 171.2" stroke="#a8a8a8" stroke-width="1.5" stroke-linecap="round"/><path d="M469 173.7L475.6 177.2" stroke="#a8a8a8" stroke-width="1.5" stroke-linecap="round"/><path d="M469 179.7L475.6 183.2" stroke="#a8a8a8" stroke-width="1.5" stroke-linecap="round"/><rect x="490" y="153.5" width="75.5" height="23.0" fill="#dde8f1"/><rect x="493.5" y="157.0" width="68.5" height="16.0" fill="#f0f0f0"/><rect x="1071" y="229.5" width="74.5" height="23.0" fill="#dde8f1"/><rect x="1074.5" y="233.0" width="67.5" height="16.0" fill="#f0f0f0"/><rect x="961" y="543" width="74" height="22.5" fill="#dde8f1"/><rect x="964.5" y="546.5" width="67" height="15.5" fill="#f0f0f0"/><rect x="1088.5" y="650" width="75.0" height="23.5" fill="#dde8f1"/><rect x="1092.0" y="653.5" width="68.0" height="16.5" fill="#f0f0f0"/><path d="M472.5 321L484 309H543.5V333H484Z" fill="url(#gBr)"/><rect x="556.5" y="309" width="144" height="24" fill="url(#gBr)"/><rect x="700" y="309" width="593" height="24" fill="url(#gYe)"/><path d="M472 477H543.5V501H472L484 489Z" fill="url(#gGn)"/><rect x="556.5" y="477" width="180" height="24" fill="url(#gGn)"/><rect x="760" y="477" width="283" height="24" fill="url(#gOr)"/><rect x="1081" y="477" width="154" height="24" fill="url(#gPk)"/><rect x="1273" y="477" width="20" height="24" fill="url(#gBl)"/><rect x="544.3" y="285.5" width="11.2" height="238.5" fill="#c07072"/><rect x="544.3" y="296.0" width="11.2" height="1.5" fill="#f2dcdc"/><rect x="544.3" y="308.0" width="11.2" height="1.5" fill="#f2dcdc"/><rect x="544.3" y="320.0" width="11.2" height="1.5" fill="#f2dcdc"/><rect x="544.3" y="332.0" width="11.2" height="1.5" fill="#f2dcdc"/><rect x="544.3" y="344.0" width="11.2" height="1.5" fill="#f2dcdc"/><rect x="544.3" y="356.0" width="11.2" height="1.5" fill="#f2dcdc"/><rect x="544.3" y="368.0" width="11.2" height="1.5" fill="#f2dcdc"/><rect x="544.3" y="380.0" width="11.2" height="1.5" fill="#f2dcdc"/><rect x="544.3" y="392.0" width="11.2" height="1.5" fill="#f2dcdc"/><rect x="544.3" y="404.0" width="11.2" height="1.5" fill="#f2dcdc"/><rect x="544.3" y="416.0" width="11.2" height="1.5" fill="#f2dcdc"/><rect x="544.3" y="428.0" width="11.2" height="1.5" fill="#f2dcdc"/><rect x="544.3" y="440.0" width="11.2" height="1.5" fill="#f2dcdc"/><rect x="544.3" y="452.0" width="11.2" height="1.5" fill="#f2dcdc"/><rect x="544.3" y="464.0" width="11.2" height="1.5" fill="#f2dcdc"/><rect x="544.3" y="476.0" width="11.2" height="1.5" fill="#f2dcdc"/><rect x="544.3" y="488.0" width="11.2" height="1.5" fill="#f2dcdc"/><rect x="544.3" y="500.0" width="11.2" height="1.5" fill="#f2dcdc"/><rect x="544.3" y="512.0" width="11.2" height="1.5" fill="#f2dcdc"/><rect x="566.9" y="289.4" width="26.2" height="62.7" rx="6.5" fill="#f2f2f2" stroke="#a9a9a9" stroke-width="2.8"/><path d="M579.5 292.4L580.2 300.4M580.0 305.5L580.8 312L579.4 312.5L580.3 318.2M580.0 323.5L580.8 330L579.4 330.5L580.3 336M580.0 341.5L581.2 349.8" fill="none" stroke="#333" stroke-width="0.9"/><rect x="577.2" y="300.0" width="5.6" height="5.6" rx="2" fill="#fff" stroke="#333" stroke-width="0.8"/><rect x="577.2" y="318.09999999999997" width="5.6" height="5.6" rx="2" fill="#fff" stroke="#333" stroke-width="0.8"/><rect x="577.2" y="335.9" width="5.6" height="5.6" rx="2" fill="#fff" stroke="#333" stroke-width="0.8"/><rect x="734.4" y="289.4" width="26.2" height="62.7" rx="6.5" fill="#f2f2f2" stroke="#a9a9a9" stroke-width="2.8"/><path d="M747.0 292.4L747.7 300.4M747.5 305.5Q747.8 311 748.5 313.5M751.3 311.5L748.7 318M747.0 324L744.0 331M746.6 328.6L747.5 336M747.5 341.5L749.0 349.8" fill="none" stroke="#333" stroke-width="0.9"/><rect x="744.7" y="300.0" width="5.6" height="5.6" rx="2" fill="#fff" stroke="#333" stroke-width="0.8"/><rect x="744.7" y="318.09999999999997" width="5.6" height="5.6" rx="2" fill="#fff" stroke="#333" stroke-width="0.8"/><rect x="744.7" y="335.9" width="5.6" height="5.6" rx="2" fill="#fff" stroke="#333" stroke-width="0.8"/><rect x="566.9" y="457.9" width="26.2" height="61.7" rx="6.5" fill="#f2f2f2" stroke="#a9a9a9" stroke-width="2.8"/><path d="M579.5 460.9L580.2 468.9M580.0 474.0L580.8 480.5L579.4 481.0L580.3 486.7M580.0 492.0L580.8 498.5L579.4 499.0L580.3 504.5M580.0 510.0L581.2 518.3" fill="none" stroke="#333" stroke-width="0.9"/><rect x="577.2" y="468.5" width="5.6" height="5.6" rx="2" fill="#fff" stroke="#333" stroke-width="0.8"/><rect x="577.2" y="486.59999999999997" width="5.6" height="5.6" rx="2" fill="#fff" stroke="#333" stroke-width="0.8"/><rect x="577.2" y="504.4" width="5.6" height="5.6" rx="2" fill="#fff" stroke="#333" stroke-width="0.8"/><rect x="734.4" y="457.9" width="26.2" height="61.7" rx="6.5" fill="#f2f2f2" stroke="#a9a9a9" stroke-width="2.8"/><path d="M747.0 460.9L747.7 468.9M747.5 474.0Q747.8 479.5 748.5 482.0M751.3 480.0L748.7 486.5M747.0 492.5L744.0 499.5M746.6 497.1L747.5 504.5M747.5 510.0L749.0 518.3" fill="none" stroke="#333" stroke-width="0.9"/><rect x="744.7" y="468.5" width="5.6" height="5.6" rx="2" fill="#fff" stroke="#333" stroke-width="0.8"/><rect x="744.7" y="486.59999999999997" width="5.6" height="5.6" rx="2" fill="#fff" stroke="#333" stroke-width="0.8"/><rect x="744.7" y="504.4" width="5.6" height="5.6" rx="2" fill="#fff" stroke="#333" stroke-width="0.8"/><path d="M578.5 353.5v3.5M581.5 353.5v3.5" stroke="#c8c8c8" stroke-width="1"/><rect x="571.5" y="357.5" width="17" height="17" fill="#f4f4f4" stroke="#bcbcbc" stroke-width="1.3"/><text x="580" y="371" font-family="Liberation Sans" font-size="13" fill="#4a6488" text-anchor="middle">M</text><rect x="573.5" y="380" width="14.5" height="7.5" rx="1.5" fill="#a6a6a6" stroke="#3a3a3a" stroke-width="0.8"/><path d="M572.0 372l5.0 5.5h-2.8000000000000003v5.5h-4.4v-5.5h-2.8000000000000003z" fill="#f39020" stroke="#d87010" stroke-width="0.5"/><path d="M578.5 521v4M581.5 521v4" stroke="#c8c8c8" stroke-width="1"/><rect x="571.5" y="525.5" width="17" height="17" fill="#f4f4f4" stroke="#bcbcbc" stroke-width="1.3"/><text x="580" y="539" font-family="Liberation Sans" font-size="13" fill="#4a6488" text-anchor="middle">M</text><rect x="573.5" y="548" width="14.5" height="7.5" rx="1.5" fill="#a6a6a6" stroke="#3a3a3a" stroke-width="0.8"/><path d="M572.0 540l5.0 5.5h-2.8000000000000003v5.5h-4.4v-5.5h-2.8000000000000003z" fill="#f39020" stroke="#d87010" stroke-width="0.5"/><rect x="776.9" y="391.9" width="62.2" height="26" rx="7" fill="#f2f2f2" stroke="#a9a9a9" stroke-width="3"/><path d="M790.2 394.5v21" stroke="#333" stroke-width="0.9"/><circle cx="790.2" cy="405" r="2.6" fill="#fff" stroke="#333" stroke-width="0.8"/><path d="M808 394.5v21" stroke="#333" stroke-width="0.9"/><circle cx="808" cy="405" r="2.6" fill="#fff" stroke="#333" stroke-width="0.8"/><path d="M826.3 394.5v21" stroke="#333" stroke-width="0.9"/><circle cx="826.3" cy="405" r="2.6" fill="#fff" stroke="#333" stroke-width="0.8"/><rect x="725" y="438" width="16.5" height="16.5" rx="1.5" fill="#6585ae"/><path d="M728.5 442.5l4 3.5-4 3.5" fill="none" stroke="#fff" stroke-width="1.5"/><path d="M733 451h6" stroke="#fff" stroke-width="1.6"/><rect x="745" y="438" width="16.5" height="16.5" rx="1.5" fill="#6585ae"/><rect x="747.5" y="442" width="11.5" height="8.5" fill="none" stroke="#d8e2ee" stroke-width="1"/><path d="M750 444l4 2.2-4 2.2" fill="none" stroke="#d8e2ee" stroke-width="1"/><path d="M727.0 434l5.0 5.5h-2.8000000000000003v5.5h-4.4v-5.5h-2.8000000000000003z" fill="#f39020" stroke="#d87010" stroke-width="0.5"/><path d="M728 535.5L760 523V535.5Z" fill="#a8a8a8"/><path d="M728 535.5H760" stroke="#404040" stroke-width="0.8"/><path d="M849.5 492.6V449.7H871.4M888.5 449.7H910.3V492.6" fill="none" stroke="#a9a9a9" stroke-width="2"/><rect x="872" y="442" width="16" height="16" fill="#f4f4f4" stroke="#b4b4b4" stroke-width="1.5"/><text x="874.5" y="456" font-family="Liberation Sans" font-size="6" fill="#556">&#916;</text><text x="879" y="456" font-family="Liberation Sans" font-size="13" fill="#5a6a80">P</text><circle cx="880" cy="489" r="21.7" fill="#f2f2f2" stroke="#a9a9a9" stroke-width="3"/><path d="M868.3 473.9L897.8 483.1M868.3 503.7L897.8 494.8" stroke="#444" stroke-width="1"/><circle cx="871" cy="488.7" r="8.3" fill="#f2f2f2" stroke="#555" stroke-width="1"/><path d="M871 488.7V480.4A8.3 8.3 0 0 1 879.3 488.7ZM871 488.7V497A8.3 8.3 0 0 1 862.7 488.7Z" fill="#b0b0b0"/><rect x="875.5" y="520.3" width="9" height="13" rx="1.5" fill="#a6a6a6" stroke="#3a3a3a" stroke-width="0.8"/><path d="M875.0 513l5.0 5.5h-2.8000000000000003v5.5h-4.4v-5.5h-2.8000000000000003z" fill="#f39020" stroke="#d87010" stroke-width="0.5"/><rect x="905" y="513.5" width="16" height="15.5" rx="1.5" fill="#6585ae"/><rect x="910.60" y="516.00" width="1.79" height="8.00" transform="rotate(0 911.5 520.0)" fill="#fff"/><rect x="910.60" y="516.00" width="1.79" height="8.00" transform="rotate(45 911.5 520.0)" fill="#fff"/><rect x="910.60" y="516.00" width="1.79" height="8.00" transform="rotate(90 911.5 520.0)" fill="#fff"/><rect x="910.60" y="516.00" width="1.79" height="8.00" transform="rotate(135 911.5 520.0)" fill="#fff"/><circle cx="911.5" cy="520.0" r="3.2" fill="#fff"/><circle cx="911.5" cy="520.0" r="1.34" fill="#6585ae"/><rect x="915.88" y="522.25" width="1.23" height="5.50" transform="rotate(0 916.5 525.0)" fill="#fff"/><rect x="915.88" y="522.25" width="1.23" height="5.50" transform="rotate(45 916.5 525.0)" fill="#fff"/><rect x="915.88" y="522.25" width="1.23" height="5.50" transform="rotate(90 916.5 525.0)" fill="#fff"/><rect x="915.88" y="522.25" width="1.23" height="5.50" transform="rotate(135 916.5 525.0)" fill="#fff"/><circle cx="916.5" cy="525.0" r="2.2" fill="#fff"/><circle cx="916.5" cy="525.0" r="0.92" fill="#6585ae"/><rect x="905" y="532" width="16" height="16" rx="1.5" fill="#6585ae"/><path d="M909 544.5l7.5-8 2 2-7.5 8z" fill="none" stroke="#fff" stroke-width="1.3"/><path d="M908 546h3" stroke="#fff" stroke-width="1"/><rect x="923" y="532" width="16" height="16" rx="1.5" fill="#6585ae"/><circle cx="934" cy="535.5" r="1.8" fill="#fff"/><rect x="931.5" y="538" width="5" height="8" rx="1.5" fill="#fff"/><path d="M926 537l2 3 2-3M928 540v5" fill="none" stroke="#fff" stroke-width="1.2"/><circle cx="962.2" cy="545.9" r="4.6" fill="none" stroke="#f08a1c" stroke-width="1.8"/><path d="M959 542.7l6.4 6.4" stroke="#f08a1c" stroke-width="1.8"/><rect x="1081.6" y="210.7" width="16.5" height="16.5" rx="1.5" fill="#6585ae"/><rect x="1087.20" y="213.20" width="1.79" height="8.00" transform="rotate(0 1088.1 217.2)" fill="#fff"/><rect x="1087.20" y="213.20" width="1.79" height="8.00" transform="rotate(45 1088.1 217.2)" fill="#fff"/><rect x="1087.20" y="213.20" width="1.79" height="8.00" transform="rotate(90 1088.1 217.2)" fill="#fff"/><rect x="1087.20" y="213.20" width="1.79" height="8.00" transform="rotate(135 1088.1 217.2)" fill="#fff"/><circle cx="1088.1" cy="217.2" r="3.2" fill="#fff"/><circle cx="1088.1" cy="217.2" r="1.34" fill="#6585ae"/><rect x="1092.48" y="219.45" width="1.23" height="5.50" transform="rotate(0 1093.1 222.2)" fill="#fff"/><rect x="1092.48" y="219.45" width="1.23" height="5.50" transform="rotate(45 1093.1 222.2)" fill="#fff"/><rect x="1092.48" y="219.45" width="1.23" height="5.50" transform="rotate(90 1093.1 222.2)" fill="#fff"/><rect x="1092.48" y="219.45" width="1.23" height="5.50" transform="rotate(135 1093.1 222.2)" fill="#fff"/><circle cx="1093.1" cy="222.2" r="2.2" fill="#fff"/><circle cx="1093.1" cy="222.2" r="0.92" fill="#6585ae"/><rect x="1099.7" y="210.7" width="16.5" height="16.5" rx="1.5" fill="#6585ae"/><rect x="1105.30" y="213.20" width="1.79" height="8.00" transform="rotate(0 1106.2 217.2)" fill="#fff"/><rect x="1105.30" y="213.20" width="1.79" height="8.00" transform="rotate(45 1106.2 217.2)" fill="#fff"/><rect x="1105.30" y="213.20" width="1.79" height="8.00" transform="rotate(90 1106.2 217.2)" fill="#fff"/><rect x="1105.30" y="213.20" width="1.79" height="8.00" transform="rotate(135 1106.2 217.2)" fill="#fff"/><circle cx="1106.2" cy="217.2" r="3.2" fill="#fff"/><circle cx="1106.2" cy="217.2" r="1.34" fill="#6585ae"/><rect x="1110.58" y="219.45" width="1.23" height="5.50" transform="rotate(0 1111.2 222.2)" fill="#fff"/><rect x="1110.58" y="219.45" width="1.23" height="5.50" transform="rotate(45 1111.2 222.2)" fill="#fff"/><rect x="1110.58" y="219.45" width="1.23" height="5.50" transform="rotate(90 1111.2 222.2)" fill="#fff"/><rect x="1110.58" y="219.45" width="1.23" height="5.50" transform="rotate(135 1111.2 222.2)" fill="#fff"/><circle cx="1111.2" cy="222.2" r="2.2" fill="#fff"/><circle cx="1111.2" cy="222.2" r="0.92" fill="#6585ae"/><rect x="1117.6" y="210.7" width="16.5" height="16.5" rx="1.5" fill="#6585ae"/><path d="M1122.85 215.45a4.7 4.7 0 1 0 6 0" fill="none" stroke="#fff" stroke-width="1.3"/><path d="M1125.85 213.95v4.5" stroke="#fff" stroke-width="1.3"/><path d="M1077.9 312.3V269.6H1100M1116 269.6H1138V312.3" fill="none" stroke="#a9a9a9" stroke-width="2"/><circle cx="1107.9" cy="269.6" r="7.5" fill="#f4f4f4" stroke="#b8b8b8" stroke-width="1.5"/><text x="1102" y="274" font-family="Liberation Sans" font-size="4.5" fill="#556">&#916;</text><text x="1105" y="274.5" font-family="Liberation Sans" font-size="10" fill="#5a6a80">P</text><rect x="1088.5" y="288.9" width="38.8" height="64.1" rx="7" fill="#f2f2f2" stroke="#a9a9a9" stroke-width="3"/><path d="M1107.9 294.2L1094 320.9L1107.9 348" fill="none" stroke="#333" stroke-width="1"/><rect x="1042.7" y="456.7" width="38.7" height="64.1" rx="7" fill="#f2f2f2" stroke="#a9a9a9" stroke-width="3"/><path d="M1048.1 515.3L1075.9 462.3" stroke="#333" stroke-width="1"/><circle cx="1054.1" cy="466.8" r="5.3" fill="none" stroke="#333" stroke-width="1"/><path d="M1050.5 466.8h7.2M1054.1 463.2v7.2" stroke="#333" stroke-width="1"/><rect x="1234.6" y="456.7" width="38.5" height="64.1" rx="7" fill="#f2f2f2" stroke="#a9a9a9" stroke-width="3"/><path d="M1239.9 462.3L1268.2 516.1M1268.2 462.3L1239.9 516.1" stroke="#333" stroke-width="1"/><circle cx="1254" cy="466.8" r="5.3" fill="#f2f2f2" stroke="#333" stroke-width="1"/><path d="M1250.5 466.8h7" stroke="#333" stroke-width="1"/><rect x="1012.6" y="433.7" width="16.5" height="16.5" rx="1.5" fill="#6585ae"/><path d="M1016.1 438.2l4 3.5-4 3.5" fill="none" stroke="#fff" stroke-width="1.5"/><path d="M1020.6 446.7h6" stroke="#fff" stroke-width="1.6"/><rect x="1032.8" y="433.7" width="16.5" height="16.5" rx="1.5" fill="#6585ae"/><rect x="1035.3" y="437.7" width="11.5" height="8.5" fill="none" stroke="#d8e2ee" stroke-width="1"/><path d="M1037.8 439.7l4 2.2-4 2.2" fill="none" stroke="#d8e2ee" stroke-width="1"/><path d="M1015.0 430l5.0 5.5h-2.8000000000000003v5.5h-4.4v-5.5h-2.8000000000000003z" fill="#f39020" stroke="#d87010" stroke-width="0.5"/><rect x="1204.8" y="433.7" width="16.5" height="16.5" rx="1.5" fill="#6585ae"/><path d="M1208.3 438.2l4 3.5-4 3.5" fill="none" stroke="#fff" stroke-width="1.5"/><path d="M1212.8 446.7h6" stroke="#fff" stroke-width="1.6"/><rect x="1224.9" y="433.7" width="16.5" height="16.5" rx="1.5" fill="#6585ae"/><rect x="1227.4" y="437.7" width="11.5" height="8.5" fill="none" stroke="#d8e2ee" stroke-width="1"/><path d="M1229.9 439.7l4 2.2-4 2.2" fill="none" stroke="#d8e2ee" stroke-width="1"/><path d="M1207.0 430l5.0 5.5h-2.8000000000000003v5.5h-4.4v-5.5h-2.8000000000000003z" fill="#f39020" stroke="#d87010" stroke-width="0.5"/><rect x="1084" y="430" width="16.5" height="16" fill="#f4f4f4" stroke="#b4b4b4" stroke-width="1.5"/><text x="1092.2" y="443" font-family="Liberation Sans" font-size="12" fill="#4a6488" text-anchor="middle">T</text><path d="M1092 446.5V499" stroke="#a9a9a9" stroke-width="1.8"/><rect x="1091.5" y="472.5" width="12" height="33" rx="6" fill="none" stroke="#a9a9a9" stroke-width="1.8"/><rect x="1047.8" y="521" width="4" height="187.60000000000002" fill="#f2684e"/><rect x="1049.2" y="521" width="1.2" height="187.60000000000002" fill="#fbb8a8"/><rect x="1072" y="521" width="4" height="187.60000000000002" fill="#3048ff"/><rect x="1073.4" y="521" width="1.2" height="187.60000000000002" fill="#98a8ff"/><rect x="1240" y="521" width="4" height="187.60000000000002" fill="#3048ff"/><rect x="1241.4" y="521" width="1.2" height="187.60000000000002" fill="#98a8ff"/><rect x="1264" y="521" width="4" height="187.60000000000002" fill="#b4bcff"/><rect x="1265.4" y="521" width="1.2" height="187.60000000000002" fill="#e4e8ff"/><path d="M1035 525H1048" stroke="#a8a8a8" stroke-width="1.5"/><circle cx="1026.6" cy="525" r="8.3" fill="#f4f4f4" stroke="#b8b8b8" stroke-width="1.8"/><text x="1026.6" y="529.5" font-family="Liberation Sans" font-size="12" fill="#4a6488" text-anchor="middle">T</text><path d="M1076 633H1089" stroke="#a8a8a8" stroke-width="1.5"/><circle cx="1097" cy="633" r="8.3" fill="#f4f4f4" stroke="#b8b8b8" stroke-width="1.8"/><text x="1097" y="637.5" font-family="Liberation Sans" font-size="12" fill="#4a6488" text-anchor="middle">T</text><circle cx="1049.7" cy="599.2" r="13.6" fill="#f2f2f2" stroke="#b4b4b4" stroke-width="2.2"/><path d="M1039.3 597.4L1049.7 587.7L1060.3 597.4" fill="none" stroke="#444" stroke-width="1"/><circle cx="1049.7" cy="602.8" r="6.2" fill="#f2f2f2" stroke="#555" stroke-width="1"/><path d="M1049.7 602.8V596.6A6.2 6.2 0 0 1 1055.9 602.8ZM1049.7 602.8V609A6.2 6.2 0 0 1 1043.5 602.8Z" fill="#b0b0b0"/><rect x="1011.5" y="595.5" width="13" height="8" rx="1.5" fill="#a6a6a6" stroke="#3a3a3a" stroke-width="0.8"/><path d="M1010.6 587l5.0 5.5h-2.8000000000000003v5.5h-4.4v-5.5h-2.8000000000000003z" fill="#f39020" stroke="#d87010" stroke-width="0.5"/><rect x="980.6" y="616.5" width="16.5" height="16.5" rx="1.5" fill="#6585ae"/><path d="M983.6 628.5h3v-6h3v6h4" fill="none" stroke="#c8d4e4" stroke-width="1.2"/><rect x="998.7" y="616.5" width="16.5" height="16.5" rx="1.5" fill="#6585ae"/><rect x="1004.30" y="619.00" width="1.79" height="8.00" transform="rotate(0 1005.2 623.0)" fill="#fff"/><rect x="1004.30" y="619.00" width="1.79" height="8.00" transform="rotate(45 1005.2 623.0)" fill="#fff"/><rect x="1004.30" y="619.00" width="1.79" height="8.00" transform="rotate(90 1005.2 623.0)" fill="#fff"/><rect x="1004.30" y="619.00" width="1.79" height="8.00" transform="rotate(135 1005.2 623.0)" fill="#fff"/><circle cx="1005.2" cy="623.0" r="3.2" fill="#fff"/><circle cx="1005.2" cy="623.0" r="1.34" fill="#6585ae"/><rect x="1009.58" y="625.25" width="1.23" height="5.50" transform="rotate(0 1010.2 628.0)" fill="#fff"/><rect x="1009.58" y="625.25" width="1.23" height="5.50" transform="rotate(45 1010.2 628.0)" fill="#fff"/><rect x="1009.58" y="625.25" width="1.23" height="5.50" transform="rotate(90 1010.2 628.0)" fill="#fff"/><rect x="1009.58" y="625.25" width="1.23" height="5.50" transform="rotate(135 1010.2 628.0)" fill="#fff"/><circle cx="1010.2" cy="628.0" r="2.2" fill="#fff"/><circle cx="1010.2" cy="628.0" r="0.92" fill="#6585ae"/><rect x="1016.6" y="616.5" width="16.5" height="16.5" rx="1.5" fill="#6585ae"/><circle cx="1027.6" cy="620.0" r="1.8" fill="#fff"/><rect x="1025.1" y="622.5" width="5" height="8" rx="1.5" fill="#fff"/><path d="M1019.6 621.5l2 3 2-3M1021.6 624.5v5" fill="none" stroke="#fff" stroke-width="1.2"/><rect x="998.7" y="634.7" width="16.5" height="16.5" rx="1.5" fill="#6585ae"/><path d="M1003.95 639.45a4.7 4.7 0 1 0 6 0" fill="none" stroke="#fff" stroke-width="1.3"/><path d="M1006.95 637.95v4.5" stroke="#fff" stroke-width="1.3"/><rect x="1016.6" y="634.7" width="16.5" height="16.5" rx="1.5" fill="#6585ae"/><path d="M1021.8499999999999 639.45a4.7 4.7 0 1 0 6 0" fill="none" stroke="#fff" stroke-width="1.3"/><path d="M1024.85 637.95v4.5" stroke="#fff" stroke-width="1.3"/><rect x="1061.7" y="669.5" width="12.299999999999955" height="3" fill="#3048ff"/><circle cx="1034.8" cy="671" r="8.3" fill="#f2f2f2" stroke="#b8b8b8" stroke-width="1.5"/><path d="M1043.1 671H1049.7" stroke="#b8b8b8" stroke-width="1.5"/><path d="M1044.2 658.5H1055.2L1049.7 671ZM1044.2 683.5H1055.2L1049.7 671ZM1062.1 666V676L1049.7 671Z" fill="#f2f2f2" stroke="#b8b8b8" stroke-width="1.5" stroke-linejoin="round"/><circle cx="1049.7" cy="671" r="3.5" fill="#f2f2f2" stroke="#b8b8b8" stroke-width="1.2"/><rect x="1253.8" y="669.5" width="12.200000000000045" height="3" fill="#b4bcff"/><circle cx="1226.6" cy="671" r="8.3" fill="#f2f2f2" stroke="#b8b8b8" stroke-width="1.5"/><path d="M1234.8999999999999 671H1241.8" stroke="#b8b8b8" stroke-width="1.5"/><path d="M1236.3 658.5H1247.3L1241.8 671ZM1236.3 683.5H1247.3L1241.8 671ZM1254 666V676L1241.8 671Z" fill="#f2f2f2" stroke="#b8b8b8" stroke-width="1.5" stroke-linejoin="round"/><circle cx="1241.8" cy="671" r="3.5" fill="#f2f2f2" stroke="#b8b8b8" stroke-width="1.2"/><path d="M985.5 677.5L1018.4 665V677.5Z" fill="#a8f4a8"/><path d="M985.5 677.5H1018.4" stroke="#404040" stroke-width="0.9"/><path d="M987.8 663l5.0 5.5h-2.8000000000000003v5.5h-4.4v-5.5h-2.8000000000000003z" fill="#f39020" stroke="#d87010" stroke-width="0.5"/><path d="M1178 677.5L1210 665V677.5Z" fill="#a8a8a8"/><path d="M1178 677.5H1210" stroke="#404040" stroke-width="0.9"/><path d="M1180.0 663l5.0 5.5h-2.8000000000000003v5.5h-4.4v-5.5h-2.8000000000000003z" fill="#f39020" stroke="#d87010" stroke-width="0.5"/><rect x="468" y="609.4" width="244.7" height="55.6" fill="#6585ae"/><rect x="480" y="633.3" width="228" height="23.6" fill="#dc4a22"/><rect x="475.5" y="604.5" width="237" height="64" rx="4" fill="none" stroke="#e8642a" stroke-width="2"/><path d="M468 670.8H712.7V697.5A2.5 2.5 0 0 1 710.2 700H468Z" fill="#6585ae"/><rect x="480" y="674" width="228" height="21.7" fill="#f0f0f0"/><path d="M468 705.3H710.2A2.5 2.5 0 0 1 712.7 707.8V794.3A2.5 2.5 0 0 1 710.2 796.8H468Z" fill="#6585ae"/><rect x="502" y="735.1" width="84.2" height="23.9" fill="#f0f0f0"/><rect x="622" y="735.1" width="84" height="23.9" fill="#f0f0f0"/><rect x="502" y="765" width="84.2" height="24" fill="#f0f0f0"/><rect x="622" y="765" width="84" height="24" fill="#f0f0f0"/><path d="M468 642h5M468 646h5" stroke="#fff" stroke-width="1.2"/><path d="M468 684l4-4" stroke="#fff" stroke-width="1.5"/><rect x="468.5" y="713" width="3" height="12" fill="none" stroke="#fff" stroke-width="1"/><path d="M468 760h3v6h-3" fill="none" stroke="#fff" stroke-width="1"/><path d="M485 739v16M482.5 740.5l2.5 2 2.5-2M482.5 753.5l2.5-2 2.5 2" transform="rotate(0 485 747)" fill="none" stroke="#fff" stroke-width="1.3"/><path d="M485 739v16M482.5 740.5l2.5 2 2.5-2M482.5 753.5l2.5-2 2.5 2" transform="rotate(60 485 747)" fill="none" stroke="#fff" stroke-width="1.3"/><path d="M485 739v16M482.5 740.5l2.5 2 2.5-2M482.5 753.5l2.5-2 2.5 2" transform="rotate(120 485 747)" fill="none" stroke="#fff" stroke-width="1.3"/><path d="M480 769c-2 3 2 5 0 9s2 5 0 8M485 769c-2 3 2 5 0 9s2 5 0 8M490 769c-2 3 2 5 0 9s2 5 0 8M477 786.5h16" fill="none" stroke="#fff" stroke-width="1.2"/><path d="M471 852.5l6-4v8z" fill="#a0a0a0"/><rect x="479.5" y="848" width="800.5" height="9.5" fill="#d9e0e3"/><rect x="496.3" y="848" width="441" height="9.5" fill="#9aa1a4"/><path d="M1290 852.5l-6-4v8z" fill="#a0a0a0"/><path d="M1901 63l9 9M1910 63l-9 9" stroke="#d4d9de" stroke-width="1.1"/><path d="M1344 117L1337.8 126.5" stroke="#7c7c7c" stroke-width="3.6" stroke-linecap="round"/><path d="M1336.1 125.3L1339.3 127.5L1335.5 129.8Z" fill="#fff" stroke="#7c7c7c" stroke-width="0.9"/><path d="M1329 130.5H1335L1335.8 129.5" fill="none" stroke="#7c7c7c" stroke-width="1"/><path d="M1331 149.8h7v-3l5 4.2-5 4.2v-3h-7z" fill="#7c7c7c"/><path d="M1343 177.8h-7v-3l-5 4.2 5 4.2v-3h7z" fill="#7c7c7c"/><path d="M1321 198.5h32" stroke="#8a8a8a" stroke-width="1"/><circle cx="1339" cy="215" r="5.5" fill="none" stroke="#7c7c7c" stroke-width="1.3"/><path d="M1335 219l-6 6" stroke="#7c7c7c" stroke-width="2.2"/><path d="M1336 215h6" stroke="#7c7c7c" stroke-width="1.3"/><path d="M1339 212v6" stroke="#7c7c7c" stroke-width="1.3"/><circle cx="1339" cy="243" r="5.5" fill="none" stroke="#7c7c7c" stroke-width="1.3"/><path d="M1335 247l-6 6" stroke="#7c7c7c" stroke-width="2.2"/><path d="M1336 243h6" stroke="#7c7c7c" stroke-width="1.3"/><rect x="1327.5" y="294.5" width="18" height="15" fill="none" stroke="#bdbdbd" stroke-width="1"/><circle cx="1336.5" cy="302" r="2.6" fill="#7c7c7c"/><path d="M1328 295l3 0-3 3zM1345 295l-3 0 3 3zM1328 309l3 0-3-3zM1345 309l-3 0 3-3z" fill="#7c7c7c"/><circle cx="1339" cy="328" r="6" fill="none" stroke="#7c7c7c" stroke-width="1.2"/><path d="M1334.5 332.5l-5 5" stroke="#7c7c7c" stroke-width="2.2"/><rect x="1326.5" y="350.5" width="20" height="15" fill="none" stroke="#7c7c7c" stroke-width="1.2"/><rect x="1329.5" y="353.5" width="13" height="8" fill="none" stroke="#7c7c7c" stroke-width="1.2"/><circle cx="1339" cy="384" r="5.5" fill="none" stroke="#7c7c7c" stroke-width="1.2"/><path d="M1335 388l-6 6" stroke="#7c7c7c" stroke-width="2.2"/><path d="M1336 384l2 2 3.5-4" fill="none" stroke="#7c7c7c" stroke-width="1.3"/><rect x="1328.5" y="408.0" width="16" height="12" fill="none" stroke="#7c7c7c" stroke-width="1.2"/><path d="M1326 405.5h3v1.5h-1.5v1.5h-1.5zM1347 405.5h-3v1.5h1.5v1.5h1.5zM1326 422.5h3v-1.5h-1.5v-1.5h-1.5zM1347 422.5h-3v-1.5h1.5v-1.5h1.5z" fill="#7c7c7c"/><rect x="1331.5" y="435.0" width="16" height="11" fill="none" stroke="#7c7c7c" stroke-width="1"/><path d="M1339.5 436.5v8M1334 440.5h11" stroke="#7c7c7c" stroke-width="1" stroke-dasharray="1.5 1.5"/><path d="M1347 447.5l6-6v6z" fill="#5a7bb0"/><rect x="1328.5" y="460.5" width="16" height="12" fill="none" stroke="#7c7c7c" stroke-width="1.2"/><rect x="1331" y="463" width="5" height="3" fill="#7c7c7c"/><path d="M1326 458h3v1.5h-1.5v1.5h-1.5zM1347 458h-3v1.5h1.5v1.5h1.5zM1326 475h3v-1.5h-1.5v-1.5h-1.5zM1347 475h-3v-1.5h1.5v-1.5h1.5z" fill="#7c7c7c"/><path d="M1326 489h22M1326 494h22M1326 499h22" stroke="#7c7c7c" stroke-width="1.4"/><rect x="1329.5" y="516.5" width="15" height="8" fill="none" stroke="#7c7c7c" stroke-width="1.2"/><path d="M1332 519.5h8M1332 522h10" stroke="#7c7c7c" stroke-width="0.8"/><path d="M1333 525l-4 4" stroke="#7c7c7c" stroke-width="1"/><circle cx="1329" cy="529" r="1" fill="#7c7c7c"/><circle cx="1344" cy="516" r="3.3" fill="#7c7c7c"/><path d="M1342.5 514.5l3 3M1345.5 514.5l-3 3" stroke="#fff" stroke-width="0.8"/><rect x="1328.5" y="542.5" width="13" height="9" fill="none" stroke="#c4e2e8" stroke-width="1.2"/><path d="M1341.5 546l5-3v9l-5-3" fill="none" stroke="#c4e2e8" stroke-width="1.2"/><path d="M1331 552l-2 6M1334 552l1 6M1337 552l-1 6M1340 552l2 6" stroke="#c4e2e8" stroke-width="1"/><path d="M1321 569.5h32" stroke="#8a8a8a" stroke-width="1"/><path d="M1331.5 580v15M1333.5 580h5l4.5 4.5v11.5h-9.5z" fill="none" stroke="#8a8a8a" stroke-width="1"/><path d="M1332 597h10" stroke="#b0b0b0" stroke-width="1"/><rect x="1328" y="612" width="18" height="7" rx="1" fill="#7c7c7c"/><rect x="1331.5" y="608" width="11" height="4" fill="none" stroke="#7c7c7c" stroke-width="1.2"/><path d="M1331.5 617v5l2 2h8v-7" fill="#fff" stroke="#7c7c7c" stroke-width="1.2"/><path d="M1866 196.5h11l-5.5 9z" fill="#fff"/><path d="M1872 264.0l7.5 6.5h-15zM1872 281.0l7.5-6.5h-15z" fill="#fff"/><path d="M1862 272.5h20" stroke="#c8c8c8" stroke-width="1"/><path d="M1872 300.0l7.5 6.5h-15zM1872 317.0l7.5-6.5h-15z" fill="#fff"/><path d="M1862 308.5h20" stroke="#c8c8c8" stroke-width="1"/><path d="M1872 336.0l7.5 6.5h-15zM1872 353.0l7.5-6.5h-15z" fill="#fff"/><path d="M1862 344.5h20" stroke="#c8c8c8" stroke-width="1"/><path d="M1866 412h11l-5.5 9z" fill="#fff"/><path d="M1765 422l10-10 2 2-10 10z" fill="none" stroke="#f0f0f0" stroke-width="1.3"/><path d="M1765 418v5h5" fill="none" stroke="#f0f0f0" stroke-width="1.2"/><path d="M1785.0 401l5.0 6.0h-2.8000000000000003v6.0h-4.4v-6.0h-2.8000000000000003z" fill="#f39020" stroke="#d87010" stroke-width="0.5"/><path d="M1866 448h11l-5.5 9z" fill="#fff"/><path d="M1765 458l10-10 2 2-10 10z" fill="none" stroke="#f0f0f0" stroke-width="1.3"/><path d="M1765 454v5h5" fill="none" stroke="#f0f0f0" stroke-width="1.2"/><path d="M1785.0 437l5.0 6.0h-2.8000000000000003v6.0h-4.4v-6.0h-2.8000000000000003z" fill="#f39020" stroke="#d87010" stroke-width="0.5"/><path d="M1366 853.5l5-4v8z" fill="#b0b0b0"/><rect x="1374" y="849" width="508" height="9" fill="#9aa1a4"/><rect x="1882" y="849" width="11" height="9" fill="#d9e0e3"/><path d="M1901 853.5l-5-4v8z" fill="#b0b0b0"/><defs><clipPath id="rowclip"><rect x="429" y="931" width="720" height="176.7"/></clipPath></defs><g clip-path="url(#rowclip)"><rect x="431" y="924" width="31.8" height="31.5" rx="3" fill="#6585ae"/><rect x="441.36" y="928.88" width="3.08" height="13.75" transform="rotate(0 442.9 935.75)" fill="#fff"/><rect x="441.36" y="928.88" width="3.08" height="13.75" transform="rotate(45 442.9 935.75)" fill="#fff"/><rect x="441.36" y="928.88" width="3.08" height="13.75" transform="rotate(90 442.9 935.75)" fill="#fff"/><rect x="441.36" y="928.88" width="3.08" height="13.75" transform="rotate(135 442.9 935.75)" fill="#fff"/><circle cx="442.9" cy="935.75" r="5.5" fill="#fff"/><circle cx="442.9" cy="935.75" r="2.31" fill="#6585ae"/><rect x="451.39" y="940.75" width="2.02" height="9.00" transform="rotate(0 452.4 945.25)" fill="#fff"/><rect x="451.39" y="940.75" width="2.02" height="9.00" transform="rotate(45 452.4 945.25)" fill="#fff"/><rect x="451.39" y="940.75" width="2.02" height="9.00" transform="rotate(90 452.4 945.25)" fill="#fff"/><rect x="451.39" y="940.75" width="2.02" height="9.00" transform="rotate(135 452.4 945.25)" fill="#fff"/><circle cx="452.4" cy="945.25" r="3.6" fill="#fff"/><circle cx="452.4" cy="945.25" r="1.51" fill="#6585ae"/><rect x="431" y="959.2" width="31.8" height="31.5" rx="3" fill="#6585ae"/><rect x="441.36" y="964.08" width="3.08" height="13.75" transform="rotate(0 442.9 970.95)" fill="#fff"/><rect x="441.36" y="964.08" width="3.08" height="13.75" transform="rotate(45 442.9 970.95)" fill="#fff"/><rect x="441.36" y="964.08" width="3.08" height="13.75" transform="rotate(90 442.9 970.95)" fill="#fff"/><rect x="441.36" y="964.08" width="3.08" height="13.75" transform="rotate(135 442.9 970.95)" fill="#fff"/><circle cx="442.9" cy="970.95" r="5.5" fill="#fff"/><circle cx="442.9" cy="970.95" r="2.31" fill="#6585ae"/><rect x="451.39" y="975.95" width="2.02" height="9.00" transform="rotate(0 452.4 980.45)" fill="#fff"/><rect x="451.39" y="975.95" width="2.02" height="9.00" transform="rotate(45 452.4 980.45)" fill="#fff"/><rect x="451.39" y="975.95" width="2.02" height="9.00" transform="rotate(90 452.4 980.45)" fill="#fff"/><rect x="451.39" y="975.95" width="2.02" height="9.00" transform="rotate(135 452.4 980.45)" fill="#fff"/><circle cx="452.4" cy="980.45" r="3.6" fill="#fff"/><circle cx="452.4" cy="980.45" r="1.51" fill="#6585ae"/><rect x="431" y="993.3" width="31.8" height="31.5" rx="3" fill="#6585ae"/><text x="440.9" y="1007.05" font-family="Liberation Sans" font-size="10" font-weight="bold" fill="#fff">1</text><path d="M437.9 1011.05h8l-4 7zM447.9 1018.05h9l-4.5-7z" fill="#fff"/><rect x="431" y="1027" width="31.8" height="31.5" rx="3" fill="#6585ae"/><path d="M441.9 1036.75a8 8 0 1 0 10 0" fill="none" stroke="#fff" stroke-width="2.2"/><path d="M446.9 1034.25v8" stroke="#fff" stroke-width="2.2"/><rect x="431" y="1061" width="31.8" height="31.5" rx="3" fill="#6585ae"/><path d="M441.9 1070.75a8 8 0 1 0 10 0" fill="none" stroke="#fff" stroke-width="2.2"/><path d="M446.9 1068.25v8" stroke="#fff" stroke-width="2.2"/><rect x="431" y="1095" width="31.8" height="31.5" rx="3" fill="#6585ae"/><rect x="441.36" y="1099.88" width="3.08" height="13.75" transform="rotate(0 442.9 1106.75)" fill="#fff"/><rect x="441.36" y="1099.88" width="3.08" height="13.75" transform="rotate(45 442.9 1106.75)" fill="#fff"/><rect x="441.36" y="1099.88" width="3.08" height="13.75" transform="rotate(90 442.9 1106.75)" fill="#fff"/><rect x="441.36" y="1099.88" width="3.08" height="13.75" transform="rotate(135 442.9 1106.75)" fill="#fff"/><circle cx="442.9" cy="1106.75" r="5.5" fill="#fff"/><circle cx="442.9" cy="1106.75" r="2.31" fill="#6585ae"/><rect x="451.39" y="1111.75" width="2.02" height="9.00" transform="rotate(0 452.4 1116.25)" fill="#fff"/><rect x="451.39" y="1111.75" width="2.02" height="9.00" transform="rotate(45 452.4 1116.25)" fill="#fff"/><rect x="451.39" y="1111.75" width="2.02" height="9.00" transform="rotate(90 452.4 1116.25)" fill="#fff"/><rect x="451.39" y="1111.75" width="2.02" height="9.00" transform="rotate(135 452.4 1116.25)" fill="#fff"/><circle cx="452.4" cy="1116.25" r="3.6" fill="#fff"/><circle cx="452.4" cy="1116.25" r="1.51" fill="#6585ae"/></g><path d="M1051 1034.4v7h-7z" fill="#5e6468"/><path d="M1125 1034.4v7h-7z" fill="#5e6468"/><path d="M1146 932.5l4.5 4h-9z" fill="#a0a0a0"/><path d="M1146 1107l4.5-4h-9z" fill="#a0a0a0"/><path d="M1197.5 955.7h9l-4.5 8z" fill="#777"/><path d="M1197.5 991.5h9l-4.5 8z" fill="#777"/><path d="M1197.5 1087.5h9l-4.5 8z" fill="#777"/><path d="M1899.5 944l4 4h-8z" fill="#a8a8a8"/><path d="M1899.5 1106l4-4h-8z" fill="#a8a8a8"/>
</svg>
</body></html>
